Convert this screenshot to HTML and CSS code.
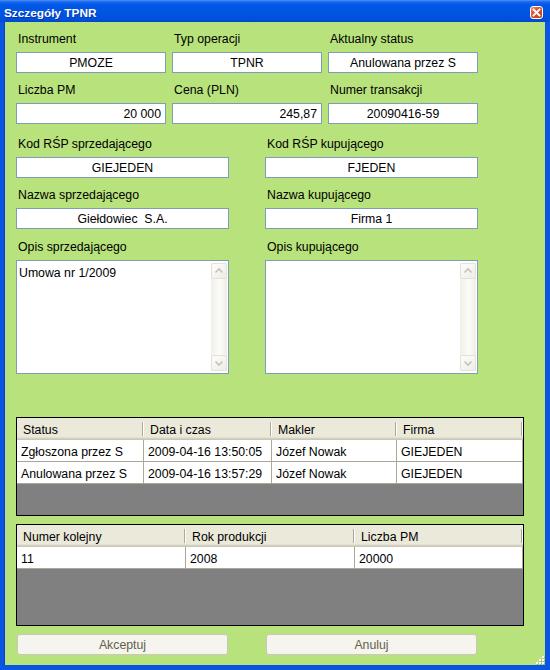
FILE: index.html
```html
<!DOCTYPE html>
<html lang="pl">
<head>
    <meta charset="UTF-8">
    <meta name="viewport" content="width=device-width, initial-scale=1.0">
    <title>Szczegóły TPNR</title>
    <link rel="stylesheet" href="styles.css">
</head>
<body>
    <div class="window">
        <!-- Title bar -->
        <div class="titlebar">
            <span class="title">Szczegóły TPNR</span>
            <span class="close-btn">
                <svg width="11" height="11" viewBox="0 0 11 11">
                    <path d="M2.5 2.5 L8.5 8.5 M8.5 2.5 L2.5 8.5" stroke="#fff" stroke-width="1.8" stroke-linecap="square"/>
                </svg>
            </span>
        </div>

        <div class="frame">
            <!-- Instrument / operation -->
            <div class="row row-3">
                <div class="field">
                    <div class="label">Instrument</div>
                    <div class="input center">PMOZE</div>
                </div>
                <div class="field">
                    <div class="label">Typ operacji</div>
                    <div class="input center">TPNR</div>
                </div>
                <div class="field">
                    <div class="label">Aktualny status</div>
                    <div class="input center">Anulowana przez S</div>
                </div>
            </div>

            <div class="row row-3 gap-10">
                <div class="field">
                    <div class="label">Liczba PM</div>
                    <div class="input right">20 000</div>
                </div>
                <div class="field">
                    <div class="label">Cena (PLN)</div>
                    <div class="input right">245,87</div>
                </div>
                <div class="field">
                    <div class="label">Numer transakcji</div>
                    <div class="input center">20090416-59</div>
                </div>
            </div>

            <!-- Seller / buyer -->
            <div class="row row-2 gap-13">
                <div class="field">
                    <div class="label">Kod RŚP sprzedającego</div>
                    <div class="input center">GIEJEDEN</div>
                </div>
                <div class="field">
                    <div class="label">Kod RŚP kupującego</div>
                    <div class="input center">FJEDEN</div>
                </div>
            </div>

            <div class="row row-2 gap-10">
                <div class="field">
                    <div class="label">Nazwa sprzedającego</div>
                    <div class="input center">Giełdowiec&nbsp; S.A.</div>
                </div>
                <div class="field">
                    <div class="label">Nazwa kupującego</div>
                    <div class="input center">Firma 1</div>
                </div>
            </div>

            <div class="row row-2 gap-11">
                <div class="field">
                    <div class="label">Opis sprzedającego</div>
                    <div class="textarea">
                        <div class="textarea-text">Umowa nr 1/2009</div>
                        <div class="scrollbar">
                            <div class="sb-btn">
                                <svg width="14" height="14" viewBox="0 0 14 14"><path d="M3.5 8.5 L7 5 L10.5 8.5" fill="none" stroke="#c6c3b4" stroke-width="1.6"/></svg>
                            </div>
                            <div class="sb-btn">
                                <svg width="14" height="14" viewBox="0 0 14 14"><path d="M3.5 5.5 L7 9 L10.5 5.5" fill="none" stroke="#c6c3b4" stroke-width="1.6"/></svg>
                            </div>
                        </div>
                    </div>
                </div>
                <div class="field">
                    <div class="label">Opis kupującego</div>
                    <div class="textarea">
                        <div class="textarea-text"></div>
                        <div class="scrollbar">
                            <div class="sb-btn">
                                <svg width="14" height="14" viewBox="0 0 14 14"><path d="M3.5 8.5 L7 5 L10.5 8.5" fill="none" stroke="#c6c3b4" stroke-width="1.6"/></svg>
                            </div>
                            <div class="sb-btn">
                                <svg width="14" height="14" viewBox="0 0 14 14"><path d="M3.5 5.5 L7 9 L10.5 5.5" fill="none" stroke="#c6c3b4" stroke-width="1.6"/></svg>
                            </div>
                        </div>
                    </div>
                </div>
            </div>

            <!-- Status history -->
            <div class="grid grid-status">
                <div class="grid-head">
                    <div class="cell">Status</div>
                    <div class="cell">Data i czas</div>
                    <div class="cell">Makler</div>
                    <div class="cell">Firma</div>
                </div>
                <div class="grid-row">
                    <div class="cell">Zgłoszona przez S</div>
                    <div class="cell">2009-04-16 13:50:05</div>
                    <div class="cell">Józef Nowak</div>
                    <div class="cell">GIEJEDEN</div>
                </div>
                <div class="grid-row">
                    <div class="cell">Anulowana przez S</div>
                    <div class="cell">2009-04-16 13:57:29</div>
                    <div class="cell">Józef Nowak</div>
                    <div class="cell">GIEJEDEN</div>
                </div>
            </div>

            <!-- Certificates -->
            <div class="grid grid-pm">
                <div class="grid-head">
                    <div class="cell">Numer kolejny</div>
                    <div class="cell">Rok produkcji</div>
                    <div class="cell">Liczba PM</div>
                </div>
                <div class="grid-row">
                    <div class="cell">11</div>
                    <div class="cell">2008</div>
                    <div class="cell">20000</div>
                </div>
            </div>

            <div class="buttons">
                <div class="btn">Akceptuj</div>
                <div class="btn">Anuluj</div>
            </div>

            <!-- resize grip -->
            <svg class="grip" width="11" height="11" viewBox="0 0 11 11">
                <rect x="9" y="3" width="2" height="2" fill="#9fbf6e"/><rect x="8" y="2" width="2" height="2" fill="#fff"/>
                <rect x="6" y="6" width="2" height="2" fill="#9fbf6e"/><rect x="5" y="5" width="2" height="2" fill="#fff"/>
                <rect x="9" y="6" width="2" height="2" fill="#9fbf6e"/><rect x="8" y="5" width="2" height="2" fill="#fff"/>
                <rect x="3" y="9" width="2" height="2" fill="#9fbf6e"/><rect x="2" y="8" width="2" height="2" fill="#fff"/>
                <rect x="6" y="9" width="2" height="2" fill="#9fbf6e"/><rect x="5" y="8" width="2" height="2" fill="#fff"/>
                <rect x="9" y="9" width="2" height="2" fill="#9fbf6e"/><rect x="8" y="8" width="2" height="2" fill="#fff"/>
            </svg>
        </div>
    </div>
</body>
</html>
```

FILE: styles.css
```css
body { margin: 0; padding: 0; font-family: "Liberation Sans", Arial, sans-serif; font-size: 12.3px; color: #000; }

.window {
    width: 550px;
    height: 670px;
}

/* XP style title bar */
.titlebar {
    height: 22px;
    box-sizing: border-box;
    padding: 4px 7px 0 4px;
    display: flex;
    justify-content: space-between;
    align-items: flex-start;
    background: linear-gradient(to bottom, #4a94fb 0, #1a66ec 2px, #0058e8 5px, #0055e3 60%, #004fd8 90%, #0046c8 100%);
}
.title {
    color: #fff;
    font-weight: bold;
    font-size: 11.8px;
    line-height: 18px;
    text-shadow: 1px 1px 0 rgba(0, 0, 60, 0.35);
}
.close-btn {
    width: 13px;
    height: 13px;
    margin-top: 2px;
    box-sizing: border-box;
    border: 1px solid #fff;
    border-radius: 3px;
    background: linear-gradient(to bottom right, #ef8a6d, #d8502d 45%, #c33b17);
    display: flex;
    align-items: center;
    justify-content: center;
}
.close-btn svg { display: block; }

/* green dialog body */
.frame {
    position: relative;
    height: 648px;
    box-sizing: border-box;
    border-style: solid;
    border-color: #0a55e2;
    border-width: 0 5px 5px 4px;
    background-color: #b8e27c;
    padding: 10px 0 0 12px;
    box-shadow: inset 1px 0 0 #0a3fc8;
}

.row-3 { display: grid; grid-template-columns: repeat(3, 150px); column-gap: 6px; }
.row-2 { display: grid; grid-template-columns: 213px 213px; column-gap: 36px; }
.gap-10 { margin-top: 10px; }
.gap-11 { margin-top: 11px; }
.gap-13 { margin-top: 13px; }

.label {
    height: 20px;
    line-height: 14px;
    padding-left: 2px;
    white-space: nowrap;
}

.input {
    height: 21px;
    box-sizing: border-box;
    border: 1px solid #7f9db9;
    background-color: #fff;
    padding: 2px 4px 0 4px;
    line-height: 17px;
    white-space: nowrap;
}
.input.center { text-align: center; }
.input.right { text-align: right; }

/* multi line text with disabled scrollbar */
.textarea {
    height: 114px;
    box-sizing: border-box;
    border: 1px solid #7f9db9;
    background-color: #fff;
    display: flex;
}
.textarea-text {
    flex: 1;
    padding: 5px 2px;
    line-height: 14px;
}
.scrollbar {
    width: 16px;
    margin: 2px 1px 2px 0;
    display: flex;
    flex-direction: column;
    justify-content: space-between;
    background: linear-gradient(to right, #f1efe8, #fcfcf9 55%, #eeede6);
}
.sb-btn {
    height: 16px;
    box-sizing: border-box;
    border: 1px solid #e4e2d8;
    border-radius: 2px;
    background: linear-gradient(to bottom right, #fdfdfb, #eeede7);
    display: flex;
    align-items: center;
    justify-content: center;
}
.sb-btn svg { display: block; }

/* data grids */
.grid {
    width: 508px;
    box-sizing: border-box;
    border: 1px solid #000;
    background-color: #808080;
}
.grid-status { height: 99px; margin-top: 43px; }
.grid-pm { height: 102px; margin-top: 8px; }

.grid-status .grid-head, .grid-status .grid-row { grid-template-columns: 127px 128px 125px 126px; }
.grid-pm .grid-head, .grid-pm .grid-row { grid-template-columns: 169px 169px 168px; }

.grid-head {
    display: grid;
    height: 22px;
    background: linear-gradient(to bottom, #ebe9da 0, #ebe9da 19px, #e2dfcf 19px, #e2dfcf 20px, #d6d2c2 20px, #d6d2c2 21px, #cbc7b8 21px);
}
.grid-head .cell {
    padding: 5px 0 0 6px;
    line-height: 14px;
    white-space: nowrap;
    background:
        linear-gradient(#aca899, #aca899) no-repeat right 1px top 4px / 1px 14px,
        linear-gradient(#fff, #fff) no-repeat right 0 top 4px / 1px 14px;
}

.grid-row {
    display: grid;
    background-color: #fff;
}
.grid-row .cell {
    height: 22px;
    box-sizing: border-box;
    border-right: 1px solid #aca899;
    border-bottom: 1px solid #aca899;
    padding: 3px 0 0 4px;
    line-height: 18px;
    white-space: nowrap;
}

/* disabled buttons */
.buttons {
    display: grid;
    grid-template-columns: 213px 213px;
    column-gap: 36px;
    margin-top: 8px;
}
.btn {
    margin: 0 1px;
    height: 21px;
    box-sizing: border-box;
    border: 1px solid #cac8bb;
    border-radius: 3px;
    background-color: #f5f4ef;
    color: #62624c;
    text-align: center;
    padding-top: 1px;
    line-height: 18px;
}

.grip {
    position: absolute;
    right: 0;
    bottom: 0;
}
```
